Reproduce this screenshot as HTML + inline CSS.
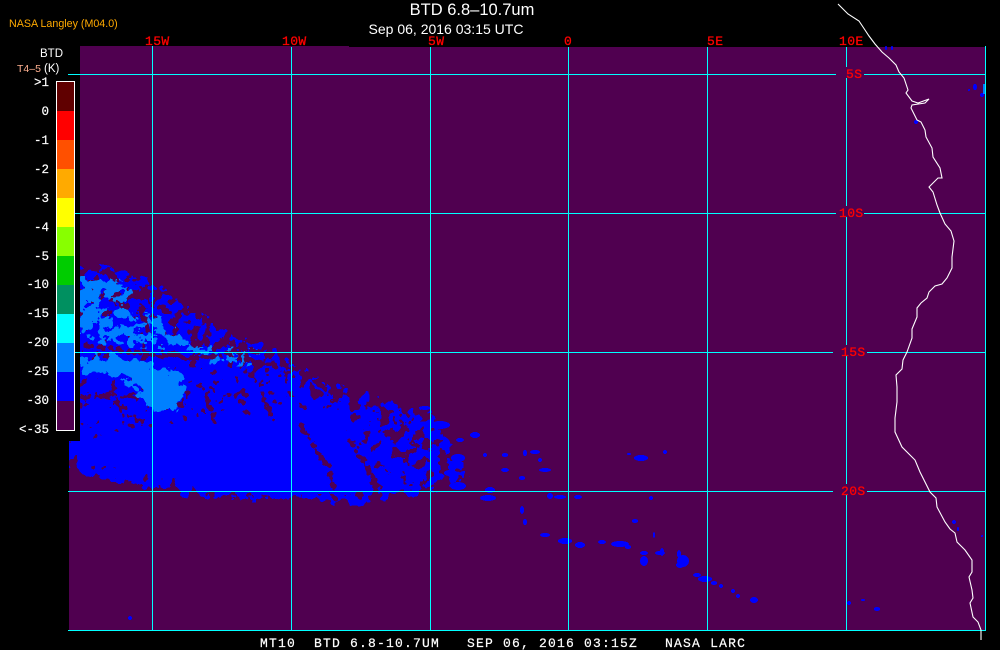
<!DOCTYPE html>
<html><head><meta charset="utf-8"><style>
html,body{margin:0;padding:0;background:#000;width:1000px;height:650px;overflow:hidden}
svg{position:absolute;left:0;top:0;display:block}
text{white-space:pre}
.m{font-family:"Liberation Mono",monospace;font-size:13px}
.s{font-family:"Liberation Sans",sans-serif}
</style></head><body>
<svg width="1000" height="650" viewBox="0 0 1000 650" xmlns="http://www.w3.org/2000/svg">
<defs>
<filter id="mot" x="0" y="0" width="1000" height="650" filterUnits="userSpaceOnUse" color-interpolation-filters="sRGB">
<feGaussianBlur in="SourceAlpha" stdDeviation="4" result="b"/>
<feTurbulence type="fractalNoise" baseFrequency="0.1" numOctaves="3" seed="4"/>
<feColorMatrix type="matrix" values="0 0 0 0 0 0 0 0 0 0 0 0 0 0 0 2.6 0 0 0 -0.8" result="n"/>
<feComposite in="b" in2="n" operator="arithmetic" k1="0" k2="1" k3="0.7" k4="-0.35"/>
<feComponentTransfer result="t"><feFuncA type="discrete" tableValues="0 0 1 1"/></feComponentTransfer>
<feFlood flood-color="#0000ff"/>
<feComposite in2="t" operator="in"/>
</filter>
<filter id="lite" x="0" y="0" width="1000" height="650" filterUnits="userSpaceOnUse" color-interpolation-filters="sRGB">
<feGaussianBlur in="SourceAlpha" stdDeviation="3" result="b"/>
<feTurbulence type="fractalNoise" baseFrequency="0.11" numOctaves="3" seed="11"/>
<feColorMatrix type="matrix" values="0 0 0 0 0 0 0 0 0 0 0 0 0 0 0 2.6 0 0 0 -0.8" result="n"/>
<feComposite in="b" in2="n" operator="arithmetic" k1="0" k2="1" k3="0.7" k4="-0.35"/>
<feComponentTransfer result="t"><feFuncA type="discrete" tableValues="0 0 1 1"/></feComponentTransfer>
<feFlood flood-color="#0080ff"/>
<feComposite in2="t" operator="in"/>
</filter>
<filter id="hole" x="0" y="0" width="1000" height="650" filterUnits="userSpaceOnUse" color-interpolation-filters="sRGB">
<feGaussianBlur in="SourceAlpha" stdDeviation="1.5" result="b"/>
<feTurbulence type="fractalNoise" baseFrequency="0.18" numOctaves="2" seed="23"/>
<feColorMatrix type="matrix" values="0 0 0 0 0 0 0 0 0 0 0 0 0 0 0 2.6 0 0 0 -0.8" result="n"/>
<feComposite in="b" in2="n" operator="arithmetic" k1="0" k2="1" k3="0.7" k4="-0.35"/>
<feComponentTransfer result="t"><feFuncA type="discrete" tableValues="0 0 1 1"/></feComponentTransfer>
<feFlood flood-color="#500050"/>
<feComposite in2="t" operator="in"/>
</filter>
<clipPath id="map"><path d="M80 46H985V631H69V441H80Z"/></clipPath>
</defs>

<path d="M80 46H349V47H864V46H864V47H985V631H69V441H80Z" fill="#500050"/>

<g clip-path="url(#map)">
<g filter="url(#mot)">
<g fill="#000">
<path fill-opacity=".55" d="M70 262L110 268L160 284L196 312L240 336L282 352L330 384L400 402L432 408L450 436L470 482L440 490L390 498L350 506L300 498L240 500L205 500L160 490L120 486L90 476L62 468L62 440L70 440Z"/>
<path fill-opacity=".5" d="M70 300L160 320L220 360L330 400L410 460L420 495L200 490L70 460Z"/>
<path fill-opacity=".7" d="M175 425L260 400L340 420L370 470L350 500L200 495L170 470Z"/>
<path fill-opacity=".45" d="M75 440L170 420L200 480L120 482L75 470Z"/>
</g>
</g>
<g filter="url(#lite)">
<g fill="#000">
<path fill-opacity=".7" d="M78 278H115L132 292L128 304L100 300L90 330L78 326Z"/>
<path fill-opacity=".52" d="M78 305L125 308L170 320L200 350L100 345L78 335Z"/>
<path fill-opacity=".85" d="M78 358L110 354L150 362L180 372L185 392L175 412L150 410L130 385L110 375L78 372Z"/>
<path fill-opacity=".5" d="M190 345L262 350L250 365L200 365Z"/>
</g>
</g>
<g filter="url(#hole)" fill="none" stroke="#000" stroke-width="6" stroke-opacity=".62" stroke-linecap="round">
<path d="M85 345L130 352L190 358L260 350"/>
<path d="M80 398L110 395L125 415L150 425"/>
<path d="M205 390L215 422M238 392L248 418M262 395L275 420"/>
<path d="M140 300L148 330"/>
<path d="M300 425L330 470L335 500"/>
<path d="M350 440L380 490"/>
<path d="M240 358L300 370L340 400"/>
</g>
<!-- trail -->
<g fill="#0000ff" shape-rendering="crispEdges">
<ellipse cx="440" cy="425" rx="10" ry="4"/><ellipse cx="458" cy="458" rx="7" ry="4"/><ellipse cx="475" cy="435" rx="5" ry="3"/><ellipse cx="458" cy="486" rx="8" ry="4"/><ellipse cx="450" cy="473" rx="6" ry="3"/><ellipse cx="490" cy="490" rx="5" ry="3"/><ellipse cx="488" cy="498" rx="8" ry="3"/><ellipse cx="522" cy="510" rx="2" ry="4"/>
<ellipse cx="485" cy="455" rx="2" ry="2"/><ellipse cx="505" cy="455" rx="3" ry="2"/><ellipse cx="525" cy="453" rx="2" ry="3"/><ellipse cx="535" cy="452" rx="5" ry="2"/><ellipse cx="540" cy="460" rx="2" ry="2"/><ellipse cx="545" cy="470" rx="6" ry="2"/><ellipse cx="505" cy="470" rx="4" ry="2"/><ellipse cx="522" cy="478" rx="3" ry="2"/><ellipse cx="460" cy="440" rx="4" ry="2"/><ellipse cx="425" cy="408" rx="6" ry="2"/>
<ellipse cx="550" cy="496" rx="3" ry="3"/><ellipse cx="560" cy="497" rx="6" ry="2"/><ellipse cx="578" cy="497" rx="4" ry="2"/><ellipse cx="525" cy="522" rx="2" ry="3"/>
<ellipse cx="641" cy="458" rx="7" ry="3"/><ellipse cx="629" cy="454" rx="2" ry="1"/><ellipse cx="665" cy="452" rx="2" ry="2"/>
<ellipse cx="651" cy="498" rx="2" ry="2"/><ellipse cx="635" cy="521" rx="3" ry="2"/><ellipse cx="654" cy="535" rx="1" ry="3"/>
<ellipse cx="602" cy="542" rx="4" ry="2"/><ellipse cx="620" cy="544" rx="9" ry="3"/><ellipse cx="628" cy="547" rx="3" ry="2"/><ellipse cx="580" cy="545" rx="5" ry="3"/><ellipse cx="565" cy="541" rx="7" ry="3"/><ellipse cx="545" cy="535" rx="5" ry="2"/>
<ellipse cx="644" cy="553" rx="4" ry="2"/><ellipse cx="644" cy="561" rx="4" ry="5"/><ellipse cx="660" cy="553" rx="5" ry="2"/><ellipse cx="662" cy="552" rx="2" ry="4"/>
<ellipse cx="683" cy="561" rx="6" ry="6"/><ellipse cx="679" cy="554" rx="2" ry="4"/><ellipse cx="680" cy="565" rx="4" ry="3"/><ellipse cx="697" cy="575" rx="4" ry="2"/><ellipse cx="705" cy="579" rx="7" ry="3"/><ellipse cx="714" cy="583" rx="3" ry="2"/><ellipse cx="721" cy="586" rx="2" ry="2"/><ellipse cx="733" cy="591" rx="2" ry="2"/><ellipse cx="738" cy="596" rx="2" ry="2"/><ellipse cx="754" cy="600" rx="4" ry="3"/>
<ellipse cx="849" cy="603" rx="2" ry="2"/><ellipse cx="863" cy="600" rx="2" ry="1"/><ellipse cx="877" cy="609" rx="3" ry="2"/>
<ellipse cx="130" cy="618" rx="2" ry="2"/>
<ellipse cx="975" cy="87" rx="2" ry="3"/><ellipse cx="982" cy="95" rx="2" ry="2"/><ellipse cx="969" cy="90" rx="1" ry="1"/>
<ellipse cx="886" cy="48" rx="1" ry="2"/><ellipse cx="892" cy="48" rx="1" ry="2"/><ellipse cx="916" cy="122" rx="2" ry="2"/>
<ellipse cx="954" cy="522" rx="2" ry="2"/><ellipse cx="958" cy="529" rx="1" ry="2"/><ellipse cx="982" cy="536" rx="1" ry="1"/>
</g>
<rect x="983" y="84" width="2" height="10" fill="#0080ff"/>
</g>

<!-- grid -->
<g fill="#00ffff" shape-rendering="crispEdges">
<rect x="152" y="46" width="1" height="585"/><rect x="291" y="47" width="1" height="584"/><rect x="430" y="47" width="1" height="584"/><rect x="568" y="47" width="1" height="584"/><rect x="707" y="47" width="1" height="584"/><rect x="846" y="47" width="1" height="584"/><rect x="985" y="46" width="1" height="585"/>
<rect x="68" y="74" width="918" height="1"/><rect x="68" y="213" width="918" height="1"/><rect x="68" y="352" width="918" height="1"/><rect x="68" y="491" width="918" height="1"/><rect x="68" y="630" width="918" height="1"/>
</g>
<g fill="#500050" shape-rendering="crispEdges">
<rect x="836" y="67" width="28" height="11"/><rect x="836" y="206" width="28" height="11"/><rect x="833" y="345" width="34" height="11"/><rect x="833" y="484" width="34" height="11"/>
</g>

<path d="M838 4L848 14L859 21L865 30L869 36L875 44L882 52L889 58L896 65L899 72L904 78L908 90L906 93L912 101L918 103L929 99L925 103L912 105L911 108L917 120L921 122L925 130L926 137L932 148L933 157L940 168L942 178L938 178L929 187L933 192L937 205L940 213L945 224L951 231L954 241L952 257L952 268L947 278L942 284L935 286L929 292L927 298L921 303L917 308L917 317L912 329L912 338L907 352L903 360L902 369L896 375L897 387L897 402L895 418L895 432L902 447L915 460L920 472L930 492L936 498L937 507L945 522L950 529L955 533L957 542L965 550L972 560L972 572L969 577L972 590L973 598L970 603L973 617L978 622L981 630L981 640" fill="none" stroke="#fff" stroke-width="1.1"/>

<g fill="#ff0000" stroke="#ff0000" stroke-width=".3" class="m">
<text x="145" y="45" letter-spacing=".4">15W</text><text x="282" y="45" letter-spacing=".4">10W</text><text x="428" y="45" letter-spacing=".4">5W</text><text x="564" y="45">0</text><text x="707" y="45" letter-spacing=".4">5E</text><text x="839" y="45" letter-spacing=".4">10E</text>
<text x="846" y="78" letter-spacing=".4">5S</text><text x="839" y="217" letter-spacing=".4">10S</text><text x="841" y="356" letter-spacing=".4">15S</text><text x="841" y="495" letter-spacing=".4">20S</text>
</g>

<text x="472" y="15" text-anchor="middle" fill="#fff" class="s" font-size="16.5">BTD 6.8–10.7um</text>
<text x="446" y="34" text-anchor="middle" fill="#fff" class="s" font-size="14">Sep 06, 2016 03:15 UTC</text>
<text x="9" y="27" fill="#ffaa00" class="s" font-size="10.7">NASA Langley (M04.0)</text>
<text x="40" y="57" fill="#fff" class="s" font-size="11.5">BTD</text>
<text x="17" y="72" fill="#ffb090" class="s" font-size="10.5">T4–5</text>
<text x="44" y="72" fill="#fff" class="s" font-size="11.5">(K)</text>

<g shape-rendering="crispEdges">
<rect x="56" y="81" width="19" height="350" fill="#fff"/>
<rect x="57" y="82" width="17" height="29" fill="#600000"/>
<rect x="57" y="111" width="17" height="29" fill="#ff0000"/>
<rect x="57" y="140" width="17" height="29" fill="#ff5000"/>
<rect x="57" y="169" width="17" height="29" fill="#ffaa00"/>
<rect x="57" y="198" width="17" height="29" fill="#ffff00"/>
<rect x="57" y="227" width="17" height="29" fill="#88ff00"/>
<rect x="57" y="256" width="17" height="29" fill="#00cc00"/>
<rect x="57" y="285" width="17" height="29" fill="#009060"/>
<rect x="57" y="314" width="17" height="29" fill="#00ffff"/>
<rect x="57" y="343" width="17" height="29" fill="#0080ff"/>
<rect x="57" y="372" width="17" height="29" fill="#0000ff"/>
<rect x="57" y="401" width="17" height="29" fill="#500050"/>
</g>
<g fill="#fff" class="m" text-anchor="end" stroke="#fff" stroke-width=".2" style="font-size:12.5px">
<text x="49" y="86">&gt;1</text><text x="49" y="115">0</text><text x="49" y="144">-1</text><text x="49" y="173">-2</text><text x="49" y="202">-3</text><text x="49" y="231">-4</text><text x="49" y="260">-5</text><text x="49" y="288">-10</text><text x="49" y="317">-15</text><text x="49" y="346">-20</text><text x="49" y="375">-25</text><text x="49" y="404">-30</text><text x="49" y="433">&lt;-35</text>
</g>

<text x="260" y="647" fill="#fff" stroke="#fff" stroke-width=".2" class="m" letter-spacing="1.2">MT10  BTD 6.8-10.7UM   SEP 06, 2016 03:15Z   NASA LARC</text>
</svg>
</body></html>
